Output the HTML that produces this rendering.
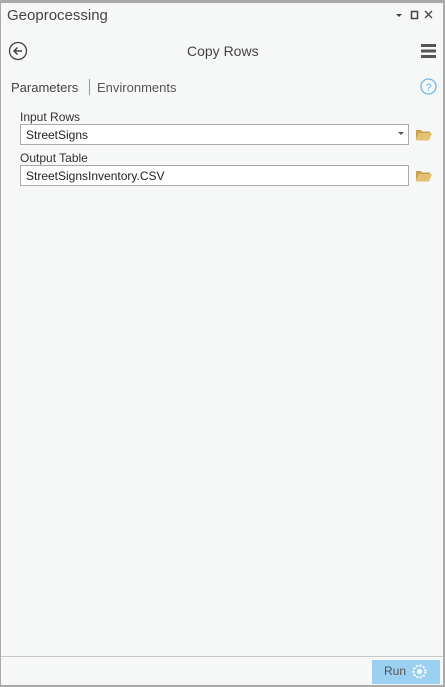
<!DOCTYPE html>
<html><head><style>
*{margin:0;padding:0;box-sizing:border-box}
body{width:445px;height:687px;background:#f6f7f7;font-family:"Liberation Sans",sans-serif;position:relative;overflow:hidden;color:#333}
.frame{position:absolute;left:0;top:0;width:445px;height:687px;border-left:1px solid #a9a9a9;border-right:2px solid #a9a9a9;border-bottom:2px solid #a9a9a9;border-top:3px solid #a9a9a9}
.t{position:absolute;white-space:nowrap}
.box{position:absolute;left:20px;width:389px;height:21px;background:#fff;border:1px solid #aaa;font-size:12px;padding:3px 0 0 5px;color:#222}
.folder{position:absolute;left:416px;width:16px;height:12px}
</style></head><body>
<div class="frame"></div>
<div class="t" style="left:7px;top:7px;font-size:15px;color:#444">Geoprocessing</div>
<svg class="t" style="left:394px;top:10px" width="45" height="12">
<path d="M2 4h6l-3 3z" fill="#444"/>
<rect x="17.5" y="1.5" width="6" height="7" fill="none" stroke="#444" stroke-width="1.5"/>
<path d="M31 1l7 7M38 1l-7 7" stroke="#444" stroke-width="1.3"/>
</svg>
<svg class="t" style="left:8px;top:41px" width="20" height="20">
<circle cx="10" cy="10" r="8.5" fill="none" stroke="#444" stroke-width="1.3"/>
<path d="M14 10H6M9.5 6.5L6 10l3.5 3.5" fill="none" stroke="#444" stroke-width="1.5"/>
</svg>
<div class="t" style="left:187px;top:43px;font-size:14px;color:#444">Copy Rows</div>
<svg class="t" style="left:421px;top:44px" width="15" height="14">
<rect x="0" y="0" width="15" height="3" fill="#555"/><rect x="0" y="5.5" width="15" height="3" fill="#555"/><rect x="0" y="11" width="15" height="3" fill="#555"/>
</svg>
<div class="t" style="left:11px;top:80px;font-size:13px;color:#444">Parameters</div>
<div class="t" style="left:89px;top:79px;width:1px;height:16px;background:#999"></div>
<div class="t" style="left:97px;top:80px;font-size:13px;color:#555">Environments</div>
<svg class="t" style="left:420px;top:78px" width="17" height="17">
<circle cx="8.5" cy="8.5" r="7.5" fill="none" stroke="#6ab6e8" stroke-width="1.3"/>
<text x="8.5" y="13" font-size="11" text-anchor="middle" fill="#6ab6e8" font-family="Liberation Sans">?</text>
</svg>
<div class="t" style="left:20px;top:110px;font-size:12px;color:#333">Input Rows</div>
<div class="box" style="top:124px">StreetSigns</div>
<svg class="t" style="left:398px;top:132px" width="8" height="5"><path d="M0 0h6l-3 3z" fill="#555"/></svg>
<svg class="folder" style="top:129px" viewBox="0 0 16 12"><path d="M0 1h5l1 1.5h8V4H3L0 11z" fill="#c9a24c"/><path d="M3 4h13l-3 7.5H0z" fill="#e4c170"/></svg>
<div class="t" style="left:20px;top:151px;font-size:12px;color:#333">Output Table</div>
<div class="box" style="top:165px">StreetSignsInventory.CSV</div>
<svg class="folder" style="top:170px" viewBox="0 0 16 12"><path d="M0 1h5l1 1.5h8V4H3L0 11z" fill="#c9a24c"/><path d="M3 4h13l-3 7.5H0z" fill="#e4c170"/></svg>
<div class="t" style="left:1px;top:656px;width:442px;height:1px;background:#c8c8c8"></div>
<div class="t" style="left:372px;top:660px;width:68px;height:24px;background:#9bd0f1"></div>
<div class="t" style="left:384px;top:664px;font-size:12px;color:#555">Run</div>
<svg class="t" style="left:412px;top:664px" width="15" height="15">
<circle cx="7.5" cy="7.5" r="6" fill="none" stroke="#fff" stroke-width="2" stroke-dasharray="2 1.5"/>
<circle cx="7.5" cy="7.5" r="2.5" fill="#fff"/>
</svg>
</body></html>
